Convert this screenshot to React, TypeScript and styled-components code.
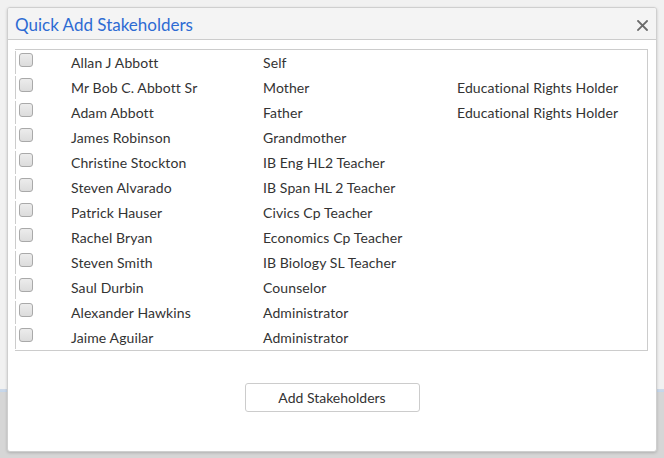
import React from 'react'
import styled, { createGlobalStyle } from 'styled-components'

const GlobalStyle = createGlobalStyle`
  html, body {
    margin: 0;
    padding: 0;
  }

  body {
    width: 664px;
    height: 458px;
    overflow: hidden;
    font-family: Lato, "Noto Sans", sans-serif;
    background: linear-gradient(
      to bottom,
      #f1f1f1 0,
      #f1f1f1 389px,
      #cfd9e6 389px,
      #c3d6ec 392px,
      #d6d6d6 392px
    );
  }
`

interface Stakeholder {
  name: string
  relation: string
  rights?: string
}

const STAKEHOLDERS: Stakeholder[] = [
  { name: 'Allan J Abbott', relation: 'Self' },
  { name: 'Mr Bob C. Abbott Sr', relation: 'Mother', rights: 'Educational Rights Holder' },
  { name: 'Adam Abbott', relation: 'Father', rights: 'Educational Rights Holder' },
  { name: 'James Robinson', relation: 'Grandmother' },
  { name: 'Christine Stockton', relation: 'IB Eng HL2 Teacher' },
  { name: 'Steven Alvarado', relation: 'IB Span HL 2 Teacher' },
  { name: 'Patrick Hauser', relation: 'Civics Cp Teacher' },
  { name: 'Rachel Bryan', relation: 'Economics Cp Teacher' },
  { name: 'Steven Smith', relation: 'IB Biology SL Teacher' },
  { name: 'Saul Durbin', relation: 'Counselor' },
  { name: 'Alexander Hawkins', relation: 'Administrator' },
  { name: 'Jaime Aguilar', relation: 'Administrator' },
]

export default function App() {
  return (
    <>
      <GlobalStyle />
      <Page>
        <Modal>
          <Header>
            <Title>Quick Add Stakeholders</Title>
            <CloseButton aria-label="Close">
              <svg width="11" height="11" viewBox="0 0 11 11">
                <path d="M1 1 L10 10 M10 1 L1 10" stroke="#6b6b6b" strokeWidth="1.8" strokeLinecap="square" />
              </svg>
            </CloseButton>
          </Header>
          <Body>
            <Table>
              {STAKEHOLDERS.map((s) => (
                <Row key={s.name}>
                  <CheckCell>
                    <Check type="checkbox" />
                  </CheckCell>
                  <Cell>{s.name}</Cell>
                  <Cell>{s.relation}</Cell>
                  <Cell>{s.rights}</Cell>
                </Row>
              ))}
            </Table>
          </Body>
          <Footer>
            <AddButton>Add Stakeholders</AddButton>
          </Footer>
        </Modal>
      </Page>
    </>
  )
}

const Page = styled.div`
  display: flex;
  padding: 7px 0 0 7px;
`

const Modal = styled.div`
  display: flex;
  flex-direction: column;
  width: 648px;
  height: 443px;
  background: #fff;
  border: 1px solid #cfcfcf;
  border-radius: 3px;
  box-shadow: 0 1px 3px rgba(0, 0, 0, 0.18);
  overflow: hidden;
`

const Header = styled.div`
  display: flex;
  align-items: center;
  justify-content: space-between;
  height: 31px;
  padding: 0 8px 0 7px;
  background: #f4f4f4;
  border-bottom: 1px solid #cccccc;
`

const Title = styled.h2`
  margin: 0;
  padding-top: 2px;
  font-size: 17px;
  font-weight: 400;
  color: #2d6bd3;
`

const CloseButton = styled.button`
  display: flex;
  padding: 0;
  margin-top: 3px;
  border: none;
  background: none;
`

const Body = styled.div`
  padding: 9px 8px 0 7px;
`

const Table = styled.div`
  display: flex;
  flex-direction: column;
  border: 1px solid #cccccc;
  border-left: none;
`

const Row = styled.div`
  display: grid;
  grid-template-columns: 56px 192px 194px 1fr;
  align-items: center;
  height: 25px;
  font-size: 14px;
  color: #333;
`

const CheckCell = styled.div`
  display: flex;
  align-items: flex-start;
  height: 23px;
  padding: 2px 0 0 3px;
  box-sizing: border-box;
  border-left: 1px solid #cccccc;
  margin-top: -1px;
`

const Check = styled.input`
  appearance: none;
  width: 14px;
  height: 14px;
  margin: 0;
  border: 1px solid #a9a9a9;
  border-radius: 3px;
  background: linear-gradient(#ececec, #dcdcdc);
`

const Cell = styled.div`
  white-space: nowrap;
  margin-top: -1px;
  letter-spacing: 0.1px;
`

const Footer = styled.div`
  display: flex;
  justify-content: center;
  padding-top: 32px;
`

const AddButton = styled.button`
  width: 175px;
  height: 29px;
  border: 1px solid #cccccc;
  border-radius: 3px;
  background: #fff;
  font-family: Lato, "Noto Sans", sans-serif;
  font-size: 14px;
  color: #333;
`
